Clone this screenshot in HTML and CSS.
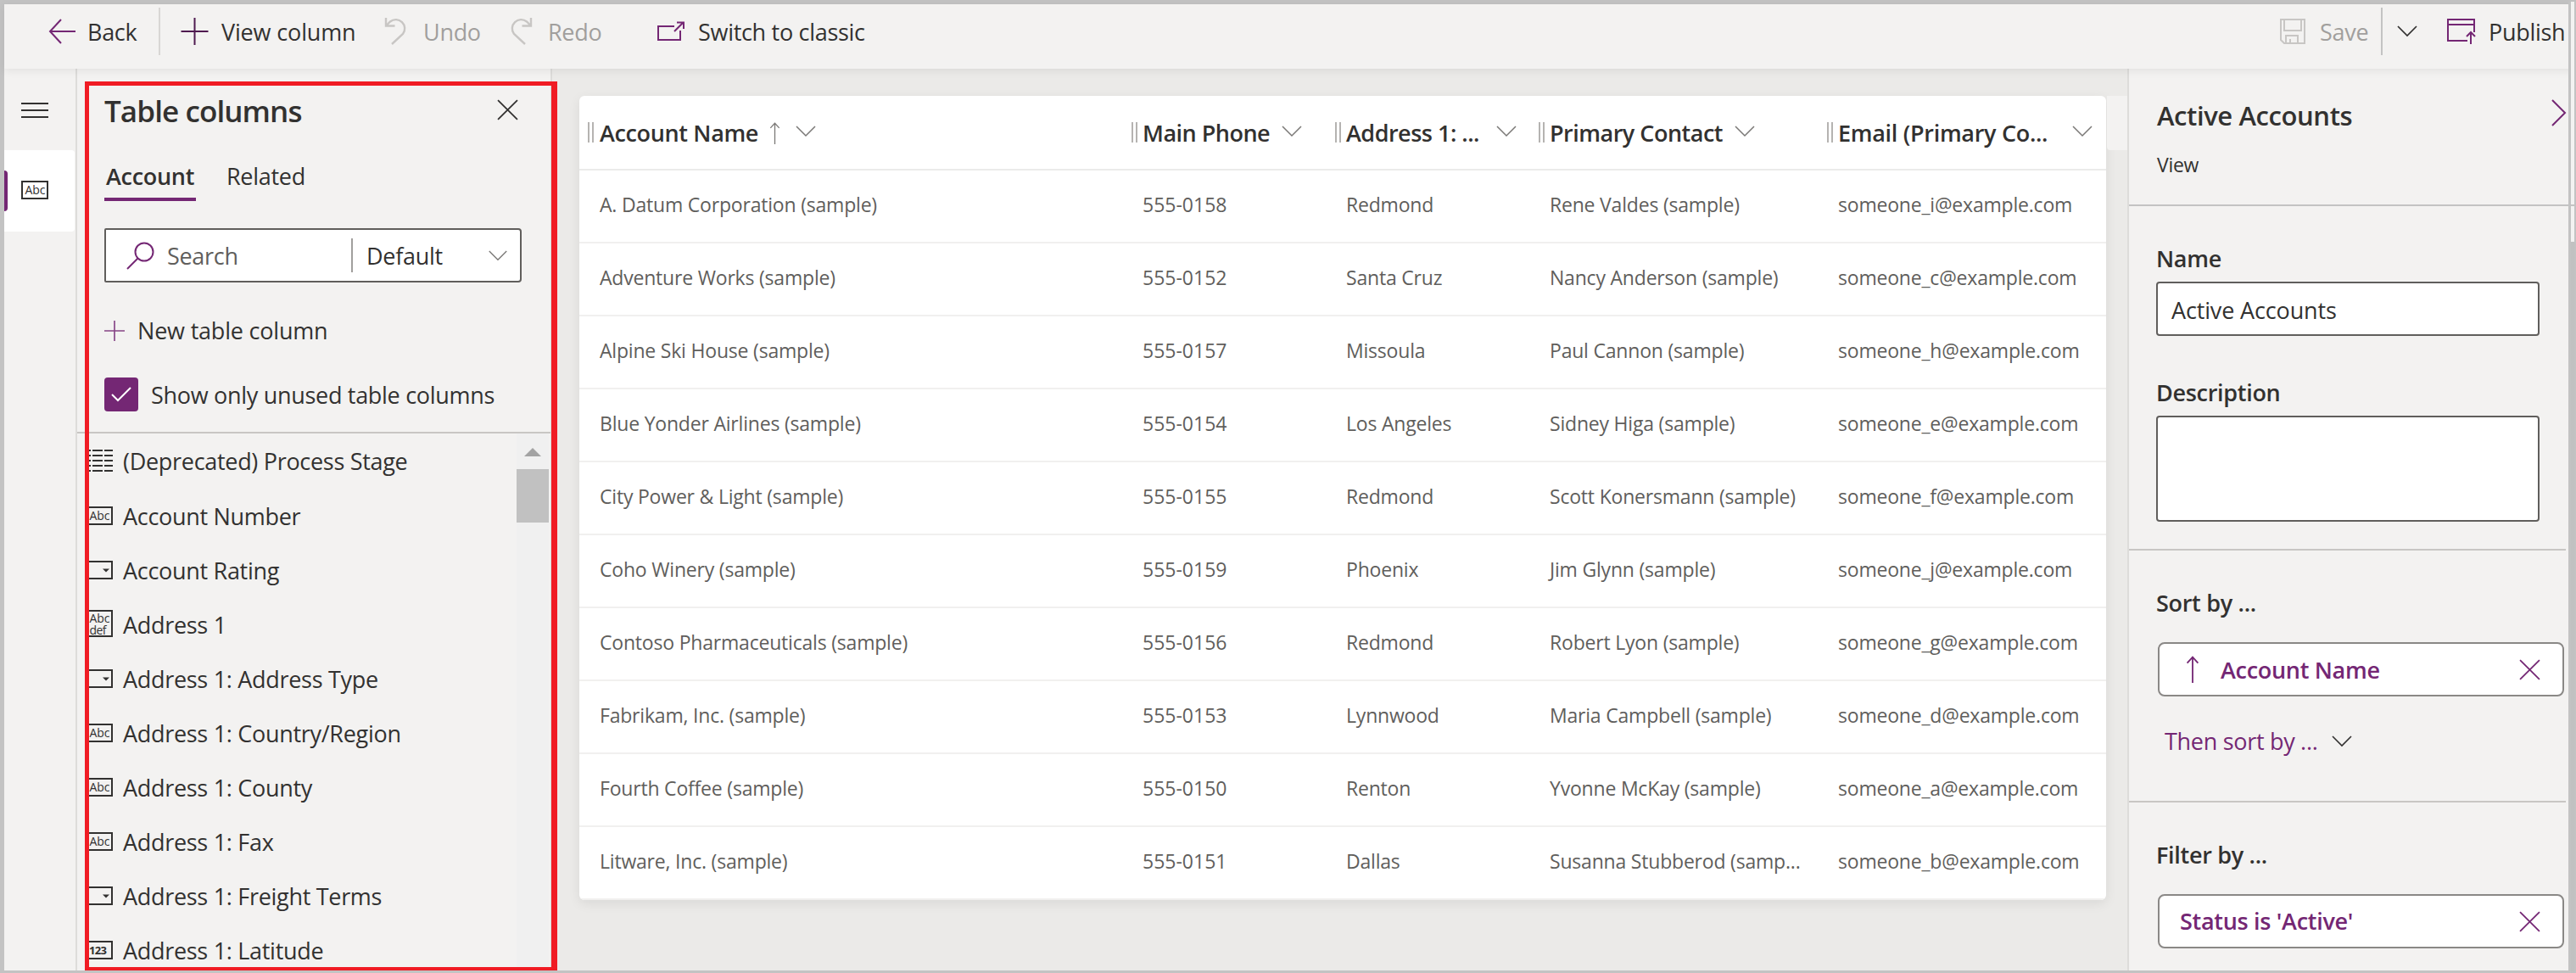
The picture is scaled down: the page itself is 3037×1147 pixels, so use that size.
FILE: index.html
```html
<!DOCTYPE html>
<html lang="en">
<head>
<meta charset="utf-8">
<title>Active Accounts</title>
<link rel="stylesheet" href="styles.css">
</head>
<body>
<svg class="defs" width="0" height="0">
  <symbol id="chev" viewBox="0 0 24 14"><path d="M1 1l11 11L23 1"/></symbol>
  <symbol id="x" viewBox="0 0 24 24"><path d="M1 1l22 22M23 1L1 23"/></symbol>
  <symbol id="plus" viewBox="0 0 32 32"><path d="M16 0v32M0 16h32"/></symbol>
  <symbol id="up" viewBox="0 0 14 30"><path d="M7 30V1M1 8l6-6.500l6 6.500"/></symbol>
  <symbol id="text" viewBox="0 0 32 22"><path d="M1 1h30v20H1z"/><text x="4.500" y="16" textLength="24">Abc</text></symbol>
  <symbol id="choice" viewBox="0 0 32 22"><path d="M1 1h30v20H1z"/><path class="solid" d="M20 9.500h8l-4 4z"/></symbol>
  <symbol id="multi" viewBox="0 0 32 32"><path d="M1 1h30v30H1z"/><text x="4.500" y="14.500" textLength="24">Abc</text><text x="4.500" y="28.500" textLength="20">def</text></symbol>
  <symbol id="num" viewBox="0 0 32 22"><path d="M1 1h30v20H1z"/><text class="b" x="4" y="16" textLength="21">123</text></symbol>
  <symbol id="lines" viewBox="0 0 32 26"><path d="M0 1h6M8 1h12M22 1h10M0 7h6M8 7h12M22 7h10M0 13h6M8 13h12M22 13h10M0 19h6M8 19h12M22 19h10M0 25h6M8 25h12M22 25h10"/></symbol>
</svg>
<div class="app">
  <header class="bar">
    <button class="cmd back"><svg class="p" width="32" height="30"><path d="M32 15H2M15 1L2 15l13 14"/></svg><span>Back</span></button>
    <i class="vr"></i>
    <button class="cmd add"><svg class="dp" width="33" height="32"><use href="#plus"/></svg><span>View column</span></button>
    <button class="cmd undo"><svg class="g" width="27" height="32"><path d="M1 0v9.500h10.500M1.500 9L6 4.500A10.500 10.500 0 0 1 21 19L8 31"/></svg><span>Undo</span></button>
    <button class="cmd redo"><svg class="g" width="27" height="32"><path d="M24 0v9.500H13.500M23.500 9L19 4.500A10.500 10.500 0 0 0 4 19L17 31"/></svg><span>Redo</span></button>
    <button class="cmd switch"><svg class="p" width="32" height="24"><path d="M20 6H1v16h26V11M20 12L30 2M23 1.500h8V9"/></svg><span>Switch to classic</span></button>
    <span class="grow"></span>
    <button class="cmd save"><svg class="g" width="30" height="30"><path d="M1 1h28v28H5l-4-4zM5 1v13h20V1M7 29v-9h14v9M12 29v-5"/></svg><span>Save</span></button>
    <i class="vr dark"></i>
    <svg class="k savemore" width="24" height="14"><use href="#chev"/></svg>
    <button class="cmd publish"><svg class="p" width="34" height="32"><path d="M32 17V2H1v25h23M1 8h31M28 31V18M23 22l5-5l5 5"/></svg><span>Publish</span></button>
  </header>
  <div class="work">
    <nav class="rail">
      <svg class="k burger" width="32" height="18"><path d="M0 1h32M0 9h32M0 17h32"/></svg>
      <div class="rail-on"><svg class="k" width="32" height="22"><use href="#text"/></svg></div>
    </nav>
    <aside class="cols">
      <div class="cols-top">
        <div class="cols-head"><h2>Table columns</h2><svg class="k" width="25" height="25"><use href="#x"/></svg></div>
        <div class="tabs"><span class="tab on">Account</span><span class="tab">Related</span></div>
        <div class="search"><svg class="p" width="33" height="33"><circle cx="21" cy="12" r="10.500"/><path d="M13.500 19.500L1 32"/></svg><span class="ph">Search</span><span class="pick">Default</span><svg class="m" width="24" height="13"><use href="#chev"/></svg></div>
        <div class="newcol"><svg class="p" width="24" height="24"><use href="#plus"/></svg><span>New table column</span></div>
        <div class="unused"><span class="check"><svg width="24" height="18"><path d="M1 9l7 7L23 1"/></svg></span><span class="lbl">Show only unused table columns</span></div>
      </div>
      <div class="list-wrap">
        <ul class="list">
          <li><svg class="k" width="32" height="26"><use href="#lines"/></svg><span>(Deprecated) Process Stage</span></li>
          <li><svg class="k" width="32" height="22"><use href="#text"/></svg><span>Account Number</span></li>
          <li><svg class="k" width="32" height="22"><use href="#choice"/></svg><span>Account Rating</span></li>
          <li><svg class="k" width="32" height="32"><use href="#multi"/></svg><span>Address 1</span></li>
          <li><svg class="k" width="32" height="22"><use href="#choice"/></svg><span>Address 1: Address Type</span></li>
          <li><svg class="k" width="32" height="22"><use href="#text"/></svg><span>Address 1: Country/Region</span></li>
          <li><svg class="k" width="32" height="22"><use href="#text"/></svg><span>Address 1: County</span></li>
          <li><svg class="k" width="32" height="22"><use href="#text"/></svg><span>Address 1: Fax</span></li>
          <li><svg class="k" width="32" height="22"><use href="#choice"/></svg><span>Address 1: Freight Terms</span></li>
          <li><svg class="k" width="32" height="22"><use href="#num"/></svg><span>Address 1: Latitude</span></li>
        </ul>
        <div class="sbar"><i class="tri"></i><i class="thumb"></i></div>
      </div>
      <div class="callout"></div>
    </aside>
    <main class="canvas">
      <div class="grid">
        <div class="row head">
          <div><i class="grip"></i><span>Account Name</span><svg class="m sort" width="13" height="26"><use href="#up"/></svg><svg class="m" width="24" height="14"><use href="#chev"/></svg></div>
          <div><i class="grip"></i><span>Main Phone</span><svg class="m" width="24" height="14"><use href="#chev"/></svg></div>
          <div><i class="grip"></i><span>Address 1: ...</span><svg class="m" width="24" height="14"><use href="#chev"/></svg></div>
          <div><i class="grip"></i><span>Primary Contact</span><svg class="m" width="24" height="14"><use href="#chev"/></svg></div>
          <div><i class="grip"></i><span class="wide">Email (Primary Co...</span><svg class="m" width="24" height="14"><use href="#chev"/></svg></div>
        </div>
        <div class="row"><div>A. Datum Corporation (sample)</div><div class="n">555-0158</div><div>Redmond</div><div>Rene Valdes (sample)</div><div>someone_i@example.com</div></div>
        <div class="row"><div>Adventure Works (sample)</div><div class="n">555-0152</div><div>Santa Cruz</div><div>Nancy Anderson (sample)</div><div>someone_c@example.com</div></div>
        <div class="row"><div>Alpine Ski House (sample)</div><div class="n">555-0157</div><div>Missoula</div><div>Paul Cannon (sample)</div><div>someone_h@example.com</div></div>
        <div class="row"><div>Blue Yonder Airlines (sample)</div><div class="n">555-0154</div><div>Los Angeles</div><div>Sidney Higa (sample)</div><div>someone_e@example.com</div></div>
        <div class="row"><div>City Power &amp; Light (sample)</div><div class="n">555-0155</div><div>Redmond</div><div>Scott Konersmann (sample)</div><div>someone_f@example.com</div></div>
        <div class="row"><div>Coho Winery (sample)</div><div class="n">555-0159</div><div>Phoenix</div><div>Jim Glynn (sample)</div><div>someone_j@example.com</div></div>
        <div class="row"><div>Contoso Pharmaceuticals (sample)</div><div class="n">555-0156</div><div>Redmond</div><div>Robert Lyon (sample)</div><div>someone_g@example.com</div></div>
        <div class="row"><div>Fabrikam, Inc. (sample)</div><div class="n">555-0153</div><div>Lynnwood</div><div>Maria Campbell (sample)</div><div>someone_d@example.com</div></div>
        <div class="row"><div>Fourth Coffee (sample)</div><div class="n">555-0150</div><div>Renton</div><div>Yvonne McKay (sample)</div><div>someone_a@example.com</div></div>
        <div class="row"><div>Litware, Inc. (sample)</div><div class="n">555-0151</div><div>Dallas</div><div>Susanna Stubberod (samp...</div><div>someone_b@example.com</div></div>
      </div>
      <div class="stub"></div>
    </main>
    <aside class="props">
      <div class="props-head"><div><h2>Active Accounts</h2><p>View</p></div><svg class="p" width="18" height="32"><path d="M1 1l15 15L1 31"/></svg></div>
      <section class="s1">
        <h3>Name</h3>
        <div class="field">Active Accounts</div>
        <h3 class="desc">Description</h3>
        <div class="area"></div>
      </section>
      <section class="s2">
        <h3>Sort by ...</h3>
        <div class="pill"><svg class="p arr" width="16" height="32"><use href="#up"/></svg><span class="pname">Account Name</span><svg class="p" width="25" height="25"><use href="#x"/></svg></div>
        <div class="then"><span>Then sort by ...</span><svg class="k" width="24" height="14"><use href="#chev"/></svg></div>
      </section>
      <section class="s3">
        <h3>Filter by ...</h3>
        <div class="pill"><span class="pstat">Status is 'Active'</span><svg class="p" width="25" height="25"><use href="#x"/></svg></div>
      </section>
    </aside>
  </div>
  <div class="edge"><i class="rule"></i><i class="thumb2"></i></div>
</div>
</body>
</html>
```
FILE: styles.css
```css
* { box-sizing: border-box; }
body { margin: 0; font: 27px/36px "Open Sans", "Noto Sans", sans-serif; letter-spacing: -0.3px; color: #323130; background: #f3f2f1; overflow: hidden; }
h2, h3, p, ul { margin: 0; padding: 0; font-weight: 600; }
span, h2, h3 { white-space: nowrap; }
i { display: block; }
svg { display: block; flex: none; fill: none; stroke: currentColor; stroke-width: 2; overflow: visible; }
svg text { fill: currentColor; stroke: none; font-size: 14px; letter-spacing: 0; }
svg text.b { font-weight: 700; font-size: 13px; }
.solid { fill: currentColor; stroke: none; }
.defs { position: absolute; }
.p { color: #742774; }
.dp { color: #4f1a50; }
.g { color: #c8c6c4; }
.k { color: #323130; }
.m { color: #7a7876; stroke-width: 1.5; }

.app { position: relative; width: 3037px; height: 1147px; border: solid #c3c3c3; border-width: 5px 0 3px 5px; display: flex; flex-direction: column; }

/* command bar */
.bar { position: relative; z-index: 2; height: 76px; flex: none; display: flex; padding: 4px 12px 0 53px; background: #f3f2f1; box-shadow: 0 2px 10px rgba(0,0,0,.08); }
.cmd { all: unset; display: flex; height: 56px; align-items: center; }
.cmd svg { margin-bottom: 1px; }
.cmd span { margin-top: 1px; }
.back { width: 129px; gap: 14px; }
.back svg { margin-left: -1px; }
.vr { width: 2px; height: 56px; background: #d8d6d4; }
.vr.dark { background: #c3c3c3; }
.add { margin-left: 24px; width: 241px; gap: 15px; letter-spacing: -.15px; }
.undo { width: 148px; gap: 18px; }
.redo { width: 173px; gap: 17px; }
.undo svg, .redo svg { stroke-width: 2.400; }
.switch { gap: 16px; }
.undo, .redo, .save { color: #a19f9d; }
.grow { flex: 1; }
.save { width: 119px; gap: 17px; }
.savemore { margin: 21px 35px 0 17px; stroke-width: 1.7; }
.publish { gap: 15px; width: 140px; }

/* icon rail */
.work { flex: 1; min-height: 0; display: flex; }
.rail { width: 86px; flex: none; border-right: 2px solid #dddcda; }
.burger { margin: 40px 0 0 20px; }
.rail-on { margin-top: 38px; width: 83px; height: 96px; background: #fff; border-radius: 0 4px 4px 0; display: flex; align-items: center; }
.rail-on::before { content: ""; width: 4px; height: 48px; background: #742774; border-radius: 0 4px 4px 0; margin-right: 16px; }
.rail-on svg { margin-bottom: 2px; }

/* table columns panel */
.cols { position: relative; width: 560px; flex: none; border-right: 2px solid #dddcda; display: flex; flex-direction: column; }
.cols-top { height: 430px; flex: none; padding: 29px 0 0 32px; border-bottom: 2px solid #c8c6c4; }
.cols-head { display: flex; width: 488px; justify-content: space-between; height: 68px; }
.cols-head h2 { font-size: 35px; line-height: 40px; letter-spacing: -.9px; margin-top: 1px; }
.cols-head svg { margin-top: 7px; stroke-width: 1.7; }
.tabs { display: flex; gap: 34px; height: 60px; padding-top: 12px; }
.tab { height: 47px; padding-left: 2px; line-height: 36px; }
.tab.on { width: 108px; font-weight: 600; border-bottom: 4px solid #742774; }
.search { margin-top: 31px; width: 492px; height: 64px; border: 2px solid #605e5c; border-radius: 2px 4px 4px 2px; background: #fff; display: flex; align-items: center; padding-left: 24px; }
.search .ph { color: #605e5c; margin-left: 15px; width: 219px; border-right: 2px solid #a19f9d; height: 40px; line-height: 42px; }
.search .pick { margin: 2px 0 0 16px; width: 143px; }
.newcol { margin-top: 39px; display: flex; align-items: center; gap: 15px; height: 36px; letter-spacing: -.2px; }
.newcol svg { stroke-width: 2.200; opacity: .85; }
.unused { display: flex; align-items: center; gap: 15px; margin-top: 37px; height: 40px; }
.unused .lbl { padding-top: 2px; }
.check { width: 40px; height: 40px; border-radius: 4px; background: #742774; color: #fff; display: flex; align-items: center; justify-content: center; }
.list-wrap { flex: 1; min-height: 0; display: flex; overflow: hidden; }
.list { list-style: none; width: 518px; padding-left: 10px; }
.list li { height: 64px; display: flex; align-items: center; gap: 12px; font-weight: 400; }
.list li:first-child { height: 65px; }
.list li span { padding-top: 2px; }
.list li:first-child span { padding-top: 1px; }
.list li svg { margin-top: -1px; }
.list li:nth-child(4) svg { margin-top: -3px; }
.sbar { width: 38px; background: #f0f0f0; padding-top: 17px; }
.tri { margin-left: 9px; border: 10px solid transparent; border-top: 0; border-bottom-color: #a3a3a3; width: 0; }
.thumb { height: 63px; margin-top: 15px; background: #c1c1c1; }
.callout { position: absolute; left: 9px; top: 15px; width: 557px; height: 1048px; border: solid #f01c24; border-width: 5px 7px 4px 5px; z-index: 3; }

/* data grid */
.canvas { width: 1857px; flex: none; background: #ebeae8; padding: 32px 0 0 32px; display: flex; align-items: flex-start; }
.grid { width: 1800px; background: #fff; border-radius: 6px; box-shadow: 0 4px 14px rgba(0,0,0,.08); overflow: hidden; }
.stub { width: 24px; height: 64px; margin-left: 1px; background: #f3f2f1; border-radius: 0 0 0 4px; }
.row { display: grid; grid-template-columns: 641px 240px 240px 340px 339px; height: 86px; border-bottom: 2px solid #f1f0ef; align-items: center; font-size: 23px; color: #605e5c; letter-spacing: -.2px; }
.row > div { padding: 0 0 5px 23px; white-space: nowrap; }
.row > div:first-child { padding-left: 24px; }
.row .n { letter-spacing: 0; }
.row.head { height: 88px; font-size: 27px; font-weight: 600; color: #323130; border-color: #ebebea; letter-spacing: -.5px; }
.row.head > div { display: flex; align-items: center; padding: 0 16px 0 10px; }
.row.head span { padding-top: 1px; margin-left: -1px; }
.row.head > div:first-child span { margin-left: 0; letter-spacing: -.35px; }
.row.head .wide { letter-spacing: -.3px; }
.grip { width: 7px; height: 24px; border: solid #b5b3b1; border-width: 0 2px; margin: 0 7px 1px 0; }
.row.head svg { margin: 0 0 2px 14px; }
.row.head .sort { margin: 2px 4px 0 13px; }
.row.head > div:nth-child(3) svg, .row.head > div:nth-child(5) svg { margin-left: auto; }

/* properties panel */
.props { width: 527px; flex: none; border-left: 2px solid #dddcda; }
.props-head { height: 162px; border-bottom: 2px solid #c3c3c3; padding: 34px 9px 0 33px; display: flex; justify-content: space-between; }
.props-head h2 { font-size: 31px; line-height: 40px; letter-spacing: -.4px; margin-top: 1px; }
.props-head p { font-size: 23px; font-weight: 400; line-height: 32px; margin-top: 22px; }
.props-head svg { margin-top: 2px; }
.props h3 { font-size: 27px; line-height: 36px; position: static; margin-left: -1px; }
section { padding-left: 33px; width: 515px; }
.s1 { height: 406px; padding-top: 44px; border-bottom: 2px solid #c8c6c4; }
.field { margin: 9px 0 0 -1px; width: 452px; height: 64px; border: 2px solid #605e5c; border-radius: 4px; background: #fff; padding: 14px 16px; letter-spacing: -.15px; }
.desc { margin-top: 49px; }
.area { margin: 9px 0 0 -1px; width: 452px; height: 125px; border: 2px solid #605e5c; border-radius: 4px; background: #fff; }
.s2 { height: 297px; padding-top: 44px; border-bottom: 2px solid #c8c6c4; }
.pill { margin: 28px 0 0 1px; width: 479px; height: 64px; border: 2px solid #8a8886; border-radius: 8px; background: #fff; display: flex; align-items: center; justify-content: space-between; padding: 0 26px 0 24px; color: #742774; font-weight: 600; }
.pill svg { stroke-width: 1.7; }
.arr { margin: 0 25px 0 7px; }
.pname { flex: 1; padding-top: 1px; }
.then { display: flex; align-items: center; gap: 17px; padding: 35px 0 0 9px; color: #742774; }
.then svg { stroke-width: 1.6; }
.s3 { padding-top: 44px; }

/* window edge with the page scrollbar */
.edge { position: absolute; right: 0; top: -3px; width: 9px; height: 1145px; border: solid #c3c3c3; border-width: 0 2px 0 3px; background: #f3f2f1; z-index: 4; }
.rule { margin-top: 239px; height: 2px; background: #c3c3c3; }
.thumb2 { margin-top: 42px; height: 862px; background: #c1c1c1; }
```
